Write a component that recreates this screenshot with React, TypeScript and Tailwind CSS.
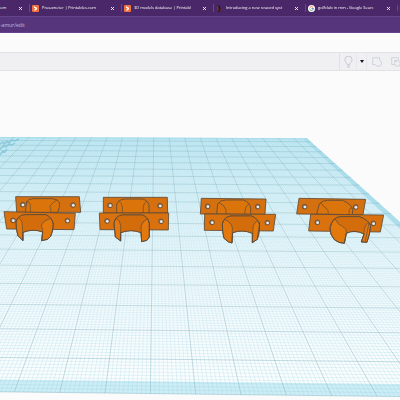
import { Plus, X } from 'lucide-react'

type TabIcon = 'printables' | 'reward' | 'google'

interface TabInfo {
  title: string
  icon: TabIcon
}

const tabs: TabInfo[] = [
  { title: 'Prusameter | Printables.com', icon: 'printables' },
  { title: '3D models database | Printabl', icon: 'printables' },
  { title: 'Introducing a new reward syst', icon: 'reward' },
  { title: 'golfclub in mm - Google Searc', icon: 'google' },
]

function Favicon({ icon }: { icon: TabIcon }) {
  if (icon === 'printables') {
    return (
      <svg viewBox="0 0 14 14" className="h-[7px] w-[7px] shrink-0">
        <rect width="14" height="14" rx="2" fill="#f0703f" />
        <path d="M4 2.500l6 3v3L5 12V8.500l2.500-1.500L4 5.500z" fill="#fff" />
      </svg>
    )
  }
  if (icon === 'reward') {
    return (
      <svg viewBox="0 0 14 14" className="h-[7px] w-[7px] shrink-0">
        <path d="M2 1h5l4 12H4z" fill="#241421" />
        <path d="M3 2l1 4v5M8 9l2 3" stroke="#b2543f" strokeWidth="1.500" fill="none" />
      </svg>
    )
  }
  return (
    <svg viewBox="0 0 14 14" className="h-[7px] w-[7px] shrink-0">
      <circle cx="7" cy="7" r="7" fill="#fff" />
      <g fill="none" strokeWidth="2">
        <path d="M4 4.500A4 4 0 0 1 10 4.500" stroke="#e9705f" />
        <path d="M4 4.500A4 4 0 0 0 4 9.500" stroke="#f0c050" />
        <path d="M4 9.500A4 4 0 0 0 9.500 10" stroke="#58a869" />
        <path d="M7 7h4A4 4 0 0 1 9.500 10" stroke="#5d8fe8" />
      </g>
    </svg>
  )
}

function CloseButton() {
  return (
    <button aria-label="Close tab" className="shrink-0 text-white">
      <X className="h-[5px] w-[5px]" strokeWidth={4} />
    </button>
  )
}

function TabBar() {
  return (
    <nav className="flex h-4 items-center overflow-hidden bg-[#4a2768] text-[4px] leading-[8px] text-white">
      <div className="flex w-[29px] shrink-0 items-center justify-between pr-[6px]">
        <span>om</span>
        <CloseButton />
      </div>
      {tabs.map((tab) => (
        <div
          key={tab.title}
          className="flex w-[92px] shrink-0 items-center gap-[3px] border-l border-[#6a4789] pr-[6px] pl-[2px]"
        >
          <Favicon icon={tab.icon} />
          <a
            href="#"
            className="w-[66px] overflow-hidden whitespace-nowrap [mask-image:linear-gradient(to_right,#000_85%,#0006)]"
          >
            {tab.title}
          </a>
          <span className="ml-auto flex">
            <CloseButton />
          </span>
        </div>
      ))}
      <button aria-label="New tab" className="shrink-0 border-l border-[#6a4789] pl-px">
        <Plus className="h-[6px] w-[6px]" strokeWidth={3} />
      </button>
    </nav>
  )
}

function Toolbar() {
  return (
    <div className="flex h-[19px] justify-end overflow-hidden border-y border-[#e2e2e5] bg-[#f0f0f2]">
      <div className="flex w-[61px] items-center overflow-hidden border-l border-[#e2e2e6] text-[#c3c6d1]">
        <button aria-label="Show all" className="flex w-4 shrink-0 justify-center">
          <svg viewBox="0 0 20 26" className="h-3 w-[9px]" fill="none" stroke="currentColor" strokeWidth="2">
            <path d="M7 19c0-5-5-6-5-11a8 8 0 0 1 16 0c0 5-5 6-5 11z" />
            <path d="M7 22h6M8 25h4" />
          </svg>
        </button>
        <button
          aria-label="Visibility options"
          className="flex h-full w-[11px] shrink-0 items-center justify-center border-x border-[#e8e8eb]"
        >
          <svg viewBox="0 0 8 6" className="h-[3px] w-1">
            <path d="M0 0h8L4 6z" fill="#15161c" />
          </svg>
        </button>
        <button aria-label="Group" className="flex w-5 shrink-0 justify-center">
          <svg viewBox="0 0 28 28" className="h-[10px] w-[10px]" fill="none" stroke="currentColor" strokeWidth="2">
            <path d="M2 2h19v7a9 9 0 1 1-11 13L2 21z" />
          </svg>
        </button>
        <button aria-label="Ungroup" className="ml-1 flex shrink-0">
          <svg viewBox="0 0 28 28" className="h-[10px] w-[10px]" fill="none" stroke="currentColor" strokeWidth="2">
            <path d="M10 21H2V2h19v6" />
            <circle cx="18" cy="18" r="8" />
            <path d="M10 13v-3h8" />
          </svg>
        </button>
      </div>
    </div>
  )
}

// Workplane projection: u runs across, v runs from the front edge to the back
const HORIZON = 4

function project(u: number, v: number) {
  const y = HORIZON + 1 / (0.002567 + 0.000249 * v)
  const x = 153.7 - 0.013 * (y - 137) + u * 0.1164 * (y - HORIZON)
  const tilt = (x - 150) * 0.012 * ((y - HORIZON) / 390)
  return `${x.toFixed(2)},${(y + tilt).toFixed(2)}`
}

const LEFT = -11
const RIGHT = 9.85
const BACK = 19.75

function quad(u1: number, v1: number, u2: number, v2: number) {
  return `M${project(u1, v1)}L${project(u2, v1)}L${project(u2, v2)}L${project(u1, v2)}Z`
}

function gridPath(step: number) {
  let d = ''
  for (let i = Math.ceil(LEFT / step); i * step <= RIGHT; i++) {
    d += `M${project(i * step, 0)}L${project(i * step, BACK)}`
  }
  for (let i = 0; i * step <= BACK; i++) {
    d += `M${project(LEFT, i * step)}L${project(RIGHT, i * step)}`
  }
  return d
}

interface Clip {
  x: number
  backPlate: string
  backHook: string
  backLobes: string
  frontPlate: string
  frontHook: string
  frontLobes: string
  inside: string
  holes: [number, number][]
}

const clips: Clip[] = [
  {
    x: 0,
    backPlate: 'M47 35L238 35L242 82L50 82Z',
    backHook: 'M76 82L80 51Q84 42 98 41L155 41Q176 43 179 57Q180 65 173 82Z',
    backLobes: 'M78 52Q91 48 91 64V82M172 44Q145 61 151 70Q155 76 152 82',
    frontPlate: 'M12 80L226 85L222 134L20 132Z',
    frontHook: 'M48 112Q52 91 76 89L138 89Q157 98 160 118Q159 140 152 154L143 163L125 167L128 141Q100 130 69 142L69 167L54 153Q48 135 48 112Z',
    frontLobes: 'M54 98Q67 101 67 122L69 167M152 100Q122 111 124 124Q129 130 128 141L125 167',
    inside: 'M54 98Q62 89 78 89H138Q147 93 152 100Q118 111 128 141Q100 130 69 142Q68 100 54 98Z',
    holes: [[68, 59], [219, 60], [39, 106], [202, 107]],
  },
  {
    x: 90,
    backPlate: 'M40 37L232 37L233 84L40 84Z',
    backHook: 'M80 84V60Q84 43 106 42H158Q174 47 177 61V84Z',
    backLobes: 'M86 48Q96 54 97 66V84M171 48Q159 56 160 66V84',
    frontPlate: 'M28 84L236 84L235 135L30 134Z',
    frontHook: 'M72 116Q75 92 98 90H157Q175 96 178 116L178 156L171 166L155 170L153 143Q124 131 92 143L92 168L76 156Z',
    frontLobes: 'M78 100Q91 105 92 122V168M173 101Q154 111 153 124L155 170',
    inside: 'M78 100Q85 90 98 90H157Q167 93 173 101Q151 113 153 143Q124 131 92 143Q92 105 78 100Z',
    holes: [[60, 61], [210, 62], [51, 108], [213, 109]],
  },
  {
    x: 190,
    backPlate: 'M34 40L228 42L225 88L31 87Z',
    backHook: 'M80 87L83 57Q90 45 107 45H160Q180 52 182 70V88Z',
    backLobes: 'M86 52Q106 62 108 75V87M177 56Q163 65 165 88',
    frontPlate: 'M44 87L257 88L250 138L43 136Z',
    frontHook: 'M97 117Q103 94 123 93H185Q205 102 209 120Q208 148 202 163L187 173L187 145Q157 132 128 143L126 174Q116 174 102 160Q97 144 97 117Z',
    frontLobes: 'M103 103Q123 111 127 127L126 174M204 105Q187 118 189 132L187 173M209 112L202 163',
    inside: 'M103 103Q112 93 124 93H185Q196 98 204 105Q186 118 187 145Q157 132 128 143Q127 112 103 103Z',
    holes: [[53, 64], [203, 65], [66, 112], [232, 113]],
  },
  {
    x: 290,
    backPlate: 'M27 40L227 43L219 89L20 87Z',
    backHook: 'M80 87L88 57Q97 46 112 46H157Q184 57 188 73L187 89Z',
    backLobes: 'M92 52Q98 64 108 69Q116 75 115 87M186 70Q177 65 177 88',
    frontPlate: 'M62 88L281 90L271 141L56 138Z',
    frontHook: 'M120 128Q127 97 151 95H209Q235 105 242 122Q240 148 231 172L214 171L222 147Q194 132 169 145L163 175Q146 175 133 164Q119 149 120 128Z',
    frontLobes: 'M135 102Q143 119 157 124Q171 131 169 145L163 175M236 111Q221 124 222 147L214 171M237 114L226 168',
    inside: 'M135 102Q143 95 153 95H209Q226 101 236 111Q221 124 222 147Q194 132 169 145Q171 131 157 124Q143 119 135 102Z',
    holes: [[44, 65], [197, 66], [82, 112], [250, 115]],
  },
]

function ClipPair({ clip }: { clip: Clip }) {
  return (
    <g transform={`translate(${clip.x} 185) scale(0.3333)`} stroke="#5c4a3b" strokeWidth="2.500" strokeLinejoin="round">
      <path d={clip.backPlate} fill="#d4700f" />
      <path d={clip.backHook} fill="#dc740c" />
      <path d={clip.backLobes} fill="none" strokeWidth="2" />
      <path d={clip.frontPlate} fill="#d9720e" />
      <path d={clip.frontHook} fill="#e3780d" />
      <path d={clip.inside} fill="#d36d0c" stroke="none" />
      <path d={clip.frontHook} fill="none" />
      <path d={clip.frontLobes} fill="none" strokeWidth="2" />
      {clip.holes.map(([cx, cy]) => (
        <g key={`${cx}-${cy}`}>
          <ellipse cx={cx} cy={cy} rx="7" ry="7" fill="#9a7a60" />
          <ellipse cx={cx + 1} cy={cy + 1} rx="4" ry="4" fill="#e3eef1" stroke="none" />
        </g>
      ))}
    </g>
  )
}

function Workplane() {
  return (
    <svg viewBox="0 71 400 329" className="block w-full" role="img" aria-label="Workplane with clips">
      <defs>
        <linearGradient id="plane" gradientUnits="userSpaceOnUse" x1="0" y1="137" x2="0" y2="393">
          <stop offset="0" stopColor="#c8ecf6" />
          <stop offset="0.2" stopColor="#dcf3f9" />
          <stop offset="0.5" stopColor="#eff9fc" />
          <stop offset="1" stopColor="#fcfefe" />
        </linearGradient>
        <linearGradient id="minor" gradientUnits="userSpaceOnUse" x1="0" y1="137" x2="0" y2="393">
          <stop offset="0" stopColor="#86cbdf" stopOpacity="0.15" />
          <stop offset="0.4" stopColor="#86c8da" stopOpacity="0.25" />
          <stop offset="1" stopColor="#86c8da" stopOpacity="0.45" />
        </linearGradient>
      </defs>
      <path d={quad(LEFT, 0, RIGHT, BACK)} fill="url(#plane)" />
      <path d={quad(LEFT, 0, RIGHT, 0.34)} fill="#cdedf6" />
      <path d={quad(RIGHT - 0.3, 0.34, RIGHT, BACK)} fill="#b2e1ee" />
      <path d={quad(LEFT, BACK - 0.3, RIGHT, BACK)} fill="#b2e1ee" />
      <path d={gridPath(0.1)} stroke="url(#minor)" strokeWidth="0.5" />
      <path d={gridPath(1)} stroke="#719eaa" strokeOpacity="0.45" strokeWidth="0.6" />
      {/* worn lettering in the far corner */}
      <path
        d="M0 144l3-2 1 2 3-3 2 2 3-3 3 1 4-2M0 149l3-3 3 1 3-3 3 1 3-2M0 155l3-4 2 1 2-3"
        fill="none"
        stroke="#6fbdd3"
        strokeOpacity="0.65"
        strokeWidth="1.500"
      />
      {clips.map((clip) => (
        <ClipPair key={clip.x} clip={clip} />
      ))}
    </svg>
  )
}

export default function App() {
  return (
    <div className="min-h-screen overflow-hidden bg-[#fbfbfb] font-['Open_Sans',sans-serif]">
      <TabBar />
      <div className="flex h-[17px] items-center overflow-hidden border-y border-[#65438e] bg-[#57357d] text-[5px] leading-[8px] text-[#c8b8da]">
        <a href="#">-amur/edit</a>
      </div>
      <header className="h-[19px] bg-[#fbfbfb]" />
      <Toolbar />
      <main>
        <Workplane />
      </main>
    </div>
  )
}
